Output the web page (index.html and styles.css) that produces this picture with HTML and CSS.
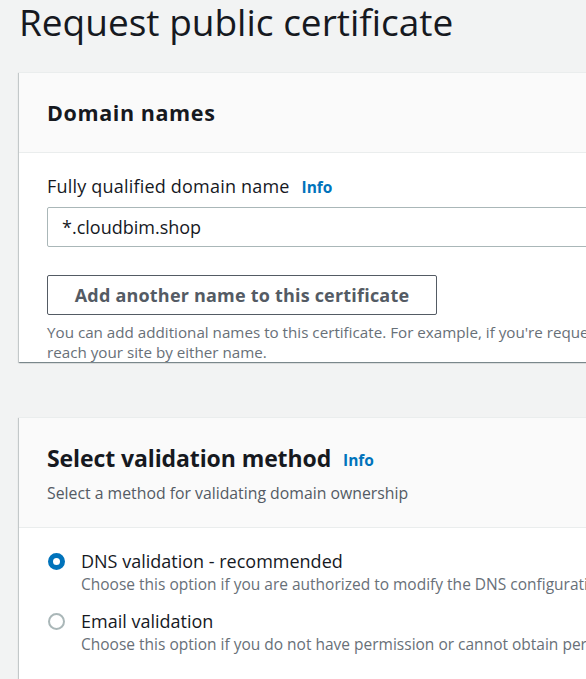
FILE: index.html
```html
<!DOCTYPE html>
<html>
<head>
<meta charset="utf-8">
<link rel="stylesheet" href="styles.css">
</head>
<body>
<div class="page">
  <h1 class="title">Request public certificate</h1>

  <section class="card card-domains">
    <div class="card-header">
      <h2 class="card-title">Domain names</h2>
    </div>
    <div class="card-body">
      <div class="field-label">Fully qualified domain name <span class="info">Info</span></div>
      <div class="input">*.cloudbim.shop</div>
      <button class="btn">Add another name to this certificate</button>
      <p class="help">You can add additional names to this certificate. For example, if you're requesting a certificate for "www.example.com", you might want to add the name "example.com" so that customers can<br>reach your site by either name.</p>
    </div>
  </section>

  <section class="card card-validation">
    <div class="card-header header-tall">
      <h2 class="card-title big">Select validation method <span class="info">Info</span></h2>
      <p class="header-desc">Select a method for validating domain ownership</p>
    </div>
    <div class="card-body radios">
      <div class="radio-row">
        <span class="radio checked"></span>
        <div class="radio-text">
          <div class="radio-label">DNS validation - recommended</div>
          <div class="radio-desc">Choose this option if you are authorized to modify the DNS configuration for the domains in your certificate request.</div>
        </div>
      </div>
      <div class="radio-row">
        <span class="radio"></span>
        <div class="radio-text">
          <div class="radio-label">Email validation</div>
          <div class="radio-desc">Choose this option if you do not have permission or cannot obtain permission to modify the DNS configuration for the domains in your certificate request.</div>
        </div>
      </div>
    </div>
  </section>
</div>
</body>
</html>
```

FILE: styles.css
```css
html, body {
  margin: 0;
  padding: 0;
  background: #f2f3f3;
  overflow: hidden;
}
body {
  font-family: "Open Sans", "Noto Sans", sans-serif;
  color: #16191f;
  width: 586px;
  height: 679px;
}
.page {
  padding-left: 19px;
  width: 900px;
}
.title {
  margin: 0;
  font-size: 37px;
  font-weight: 400;
  line-height: 44px;
  height: 72px;
  letter-spacing: 0;
}
.card {
  background: #fff;
  box-shadow: 0 1px 1px 0 rgba(0,28,36,0.3), 1px 1px 1px 0 rgba(0,28,36,0.15), -1px 1px 1px 0 rgba(0,28,36,0.15);
  border-top: 1px solid #eaeded;
  width: 800px;
}
.card-validation { margin-top: 55px; }
.card-header {
  background: #fafafa;
  border-bottom: 1px solid #eaeded;
  height: 79px;
  padding: 0 28px;
  display: flex;
  flex-direction: column;
  justify-content: center;
}
.header-tall {
  height: auto;
  justify-content: flex-start;
  padding-top: 25px;
  padding-bottom: 23px;
}
.card-title {
  margin: 0;
  font-size: 21.5px;
  font-weight: 700;
  line-height: 28px;
  letter-spacing: 0.6px;
}
.card-title.big {
  font-size: 23px;
  line-height: 30px;
  letter-spacing: -0.1px;
}
.info {
  color: #0073bb;
  font-size: 15.5px;
  font-weight: 700;
  margin-left: 8px;
  letter-spacing: 0;
}
.card-title .info { margin-left: 6px; vertical-align: 1px; }
.header-desc {
  margin: 7px 0 0;
  font-size: 15.8px;
  line-height: 22px;
  color: #545b64;
}
.card-body {
  padding: 21px 28px 0;
}
.field-label {
  font-size: 18px;
  line-height: 24px;
  letter-spacing: 0.2px;
}
.field-label .info { margin-left: 7px; }
.input {
  margin-top: 8px;
  height: 40px;
  box-sizing: border-box;
  border: 1px solid #aab7b8;
  border-radius: 2px;
  padding: 0 14px;
  font-size: 18px;
  line-height: 38px;
}
.btn {
  display: block;
  margin-top: 28px;
  width: 390px;
  height: 40px;
  background: #fff;
  border: 1px solid #545b64;
  border-radius: 2px;
  font-family: inherit;
  font-size: 18px;
  font-weight: 700;
  color: #545b64;
  padding: 0;
  letter-spacing: 0.2px;
}
.help {
  margin: 7px 0 0;
  font-size: 15.2px;
  line-height: 20px;
  color: #687078;
  white-space: nowrap;
}
.radios {
  padding-top: 21px;
  padding-bottom: 20px;
}
.radio-row {
  display: flex;
  align-items: flex-start;
  margin-bottom: 14px;
}
.radio {
  width: 17px;
  height: 17px;
  box-sizing: border-box;
  border-radius: 50%;
  border: 2px solid #aab7b8;
  margin: 4px 16px 0 1px;
  flex: none;
  background: #fff;
}
.radio.checked {
  border: 5px solid #0073bb;
}
.radio-label {
  font-size: 18px;
  line-height: 24px;
}
.radio-desc {
  font-size: 15.5px;
  line-height: 22px;
  color: #687078;
  white-space: nowrap;
}
```
